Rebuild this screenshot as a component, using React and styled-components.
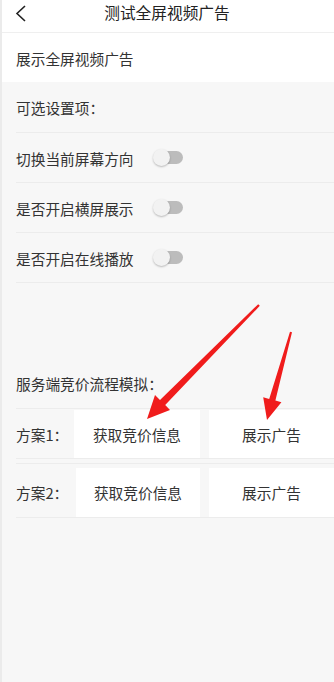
import React from "react";
import styled, { createGlobalStyle } from "styled-components";

const Global = createGlobalStyle`
  html, body { margin: 0; padding: 0; }
  body {
    font-family: "Noto Sans CJK SC", "Noto Sans", sans-serif;
    color: #333;
    background: #f7f7f7;
  }
`;

const Page = styled.div`
  position: relative;
  min-height: 682px;
  background: #f7f7f7;
  border-left: 2px solid #ebebeb;
  box-sizing: border-box;
  overflow: hidden;
`;

const Header = styled.div`
  height: 33px;
  background: #fff;
  border-bottom: 1px solid #efefef;
  box-sizing: border-box;
  display: flex;
  align-items: flex-start;
  justify-content: center;
  position: relative;
`;

const Back = styled.svg`
  position: absolute;
  left: 13px;
  top: 5px;
`;

const Title = styled.div`
  font-size: 15.7px;
  line-height: 26px;
  color: #222;
  margin-left: -2px;
`;

const WhiteRow = styled.div`
  height: 49px;
  background: #fff;
  display: flex;
  align-items: center;
  padding: 2px 0 0 14px;
  box-sizing: border-box;
  font-size: 14.7px;
`;

const SectionTitle = styled.div`
  height: ${(p) => p.h}px;
  display: flex;
  align-items: flex-end;
  padding: 0 0 ${(p) => p.pb}px 14px;
  box-sizing: border-box;
  font-size: 14.7px;
  line-height: 18px;
`;

const List = styled.div`
  margin-left: 14px;
  border-top: 1px solid #ececec;
`;

const ToggleRow = styled.div`
  height: 50px;
  display: flex;
  align-items: center;
  border-bottom: 1px solid #ececec;
  box-sizing: border-box;
  font-size: 14.7px;
  gap: 19px;
  padding-top: 1px;
`;

const Switch = styled.div`
  position: relative;
  width: 31px;
  height: 18px;
`;

const Track = styled.div`
  position: absolute;
  left: 8px;
  top: 2px;
  width: 22px;
  height: 13px;
  border-radius: 7px;
  background: #bcbcbc;
`;

const Knob = styled.div`
  position: absolute;
  left: 0;
  top: 0;
  width: 17px;
  height: 17px;
  border-radius: 50%;
  background: #f2f2f2;
  box-shadow: 0 1px 2px rgba(0, 0, 0, 0.25);
`;

const PlanRow = styled.div`
  display: flex;
  align-items: stretch;
  height: ${(p) => p.h}px;
  padding-top: ${(p) => p.pt}px;
  box-sizing: border-box;
  border-bottom: 1px solid #ececec;
  border-top: 1px solid #ececec;
  margin-left: 14px;
  margin-top: ${(p) => p.mt || 0}px;
`;

const PlanLabel = styled.div`
  width: ${(p) => p.w}px;
  display: flex;
  align-items: center;
  font-size: 14.7px;
`;

const PlanButton = styled.div`
  width: ${(p) => p.w}px;
  margin-left: ${(p) => p.ml || 0}px;
  height: ${(p) => p.bh}px;
  background: #fff;
  display: flex;
  align-items: center;
  justify-content: center;
  font-size: 14.7px;
  color: #333;
`;

const Overlay = styled.svg`
  position: absolute;
  left: 0;
  top: 0;
  pointer-events: none;
`;

function Toggle() {
  return (
    <Switch>
      <Track />
      <Knob />
    </Switch>
  );
}

export default function App() {
  return (
    <>
      <Global />
      <Page>
        <Header>
          <Back width="12" height="17" viewBox="0 0 12 17">
            <polyline points="10,1 2,8.5 10,16" fill="none" stroke="#222" strokeWidth="1.6" />
          </Back>
          <Title>测试全屏视频广告</Title>
        </Header>
        <WhiteRow>展示全屏视频广告</WhiteRow>
        <SectionTitle h={50} pb={15}>可选设置项：</SectionTitle>
        <List>
          <ToggleRow>
            <span>切换当前屏幕方向</span>
            <Toggle />
          </ToggleRow>
          <ToggleRow>
            <span>是否开启横屏展示</span>
            <Toggle />
          </ToggleRow>
          <ToggleRow>
            <span>是否开启在线播放</span>
            <Toggle />
          </ToggleRow>
        </List>
        <SectionTitle h={125} pb={15}>服务端竞价流程模拟：</SectionTitle>
        <PlanRow h={51} pt={1}>
          <PlanLabel w={58}>方案1：</PlanLabel>
          <PlanButton w={126} bh={48}>获取竞价信息</PlanButton>
          <PlanButton w={125} ml={9} bh={48}>展示广告</PlanButton>
        </PlanRow>
        <PlanRow mt={4} h={55} pt={4}>
          <PlanLabel w={60}>方案2：</PlanLabel>
          <PlanButton w={124} bh={49}>获取竞价信息</PlanButton>
          <PlanButton w={125} ml={9} bh={49}>展示广告</PlanButton>
        </PlanRow>
        <Overlay width="334" height="682" viewBox="0 0 334 682">
          <polygon
            points="257.8,305.8 163.2,405 168,410 145,419 153,395 158,400 256.2,304.2"
            fill="#f01c1c"
          />
          <polygon
            points="290,332.2 273.4,400.5 279.4,402.2 265,420 261.2,397.3 267.2,398.9 288,331.8"
            fill="#f01c1c"
          />
        </Overlay>
      </Page>
    </>
  );
}
